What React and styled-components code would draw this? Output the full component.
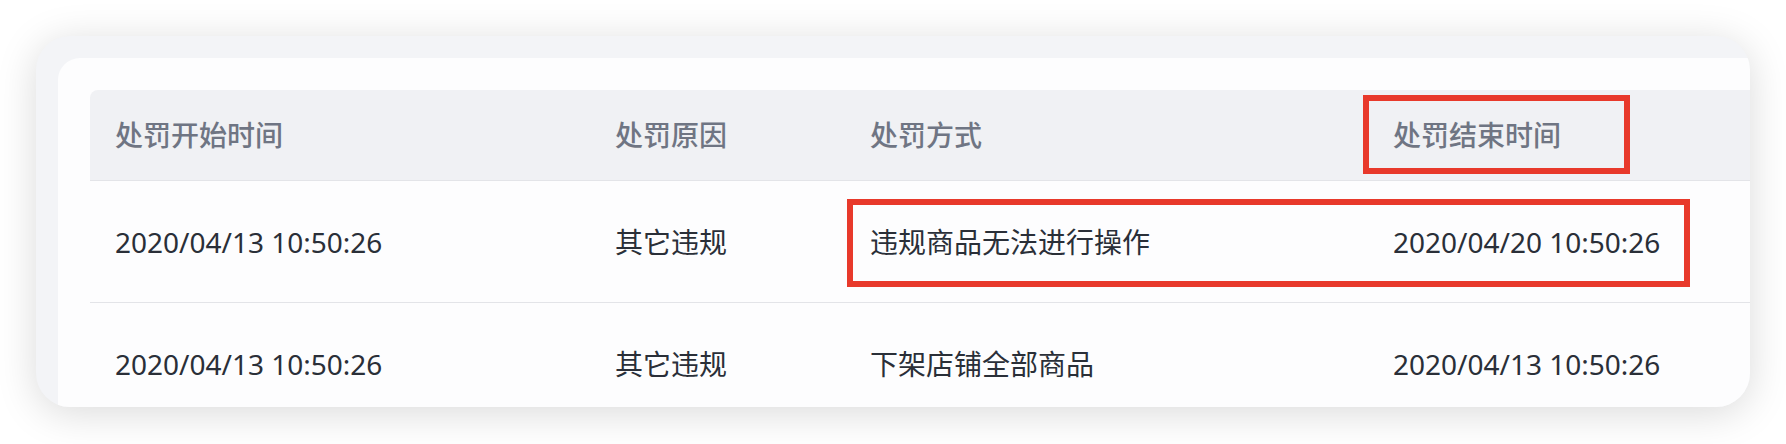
import React from 'react';
import styled, { createGlobalStyle } from 'styled-components';

const GlobalStyle = createGlobalStyle`
  html, body {
    margin: 0;
    padding: 0;
    background: #ffffff;
  }
  body {
    font-family: "Noto Sans", "Open Sans", "Noto Sans CJK SC", sans-serif;
  }
`;

const Page = styled.div`
  width: 1786px;
  height: 444px;
  padding: 36px 0 0 36px;
  box-sizing: border-box;
  overflow: hidden;
`;

const Card = styled.div`
  width: 1714px;
  height: 371px;
  box-sizing: border-box;
  padding: 22px 0 0 22px;
  background: #f3f4f7;
  border-radius: 34px;
  overflow: hidden;
  box-shadow: 0 6px 40px rgba(0, 0, 0, 0.15);
`;

const Panel = styled.div`
  height: 100%;
  box-sizing: border-box;
  padding: 32px 0 0 32px;
  background: #fdfdfe;
  border-radius: 22px 0 0 0;
`;

const Table = styled.div`
  width: 1720px;
  display: flex;
  flex-direction: column;
`;

const Row = styled.div`
  position: relative;
  display: grid;
  grid-template-columns: 500px 255px 523px 1fr;
  height: ${(p) => (p.$head ? '90px' : '121px')};
  align-items: center;
  background: ${(p) => (p.$head ? '#f0f1f4' : 'transparent')};
  border-bottom: 1px solid #e3e4e8;
  border-radius: ${(p) => (p.$head ? '8px 0 0 0' : '0')};
`;

const Cell = styled.div`
  padding-left: 25px;
  font-size: 28px;
  line-height: 1;
  white-space: nowrap;
  font-weight: ${(p) => (p.$head ? 500 : 400)};
  color: ${(p) => (p.$head ? '#6f7583' : '#2a2f38')};
`;

const Highlight = styled.div`
  position: absolute;
  left: ${(p) => p.$left}px;
  top: ${(p) => p.$top}px;
  width: ${(p) => p.$width}px;
  height: ${(p) => p.$height}px;
  box-sizing: border-box;
  border: 6px solid #e8392b;
  pointer-events: none;
`;

const columns = ['处罚开始时间', '处罚原因', '处罚方式', '处罚结束时间'];

const rows = [
  ['2020/04/13 10:50:26', '其它违规', '违规商品无法进行操作', '2020/04/20 10:50:26'],
  ['2020/04/13 10:50:26', '其它违规', '下架店铺全部商品', '2020/04/13 10:50:26'],
];

export default function App() {
  return (
    <>
      <GlobalStyle />
      <Page>
        <Card>
          <Panel>
            <Table>
              <Row $head>
                {columns.map((c) => (
                  <Cell $head key={c}>{c}</Cell>
                ))}
                <Highlight $left={1273} $top={5} $width={267} $height={79} />
              </Row>
              {rows.map((r, i) => (
                <Row key={i}>
                  {r.map((v, j) => (
                    <Cell key={j}>{v}</Cell>
                  ))}
                  {i === 0 && (
                    <Highlight $left={757} $top={18} $width={843} $height={88} />
                  )}
                </Row>
              ))}
            </Table>
          </Panel>
        </Card>
      </Page>
    </>
  );
}
